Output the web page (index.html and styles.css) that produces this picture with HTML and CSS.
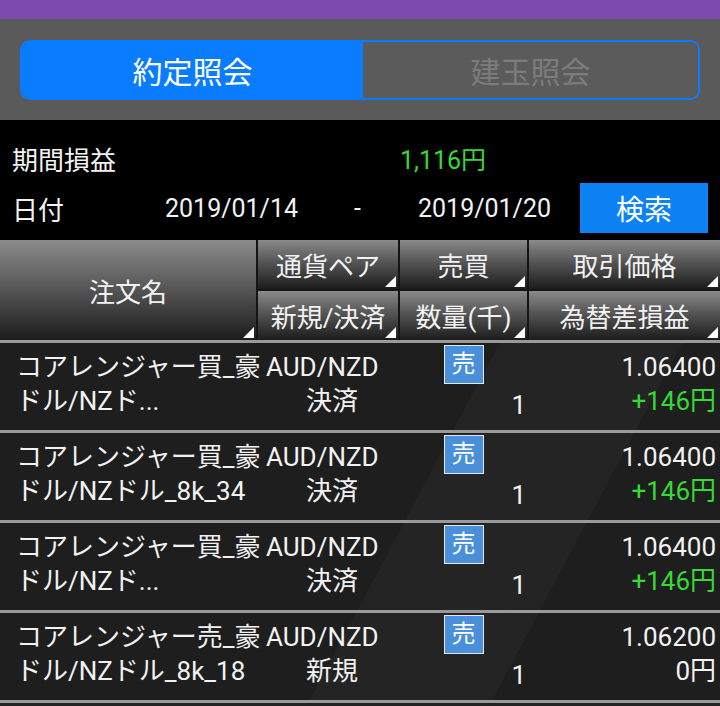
FILE: index.html
```html
<!DOCTYPE html>
<html lang="ja">
<head>
    <meta charset="UTF-8">
    <meta name="viewport" content="width=device-width, initial-scale=1.0">
    <title>約定照会</title>
    <link rel="stylesheet" href="styles.css">
</head>
<body>
    <div class="topbar"></div>

    <div class="tabs-area">
        <div class="tabs">
            <div class="tab active">約定照会</div>
            <div class="tab">建玉照会</div>
        </div>
    </div>

    <div class="summary">
        <div class="summary-row">
            <span class="summary-label">期間損益</span>
            <span class="profit">1,116円</span>
        </div>
        <div class="summary-row">
            <span class="date-label">日付</span>
            <span class="date-from">2019/01/14</span>
            <span class="date-sep">-</span>
            <span class="date-to">2019/01/20</span>
            <button type="button" class="search-button">検索</button>
        </div>
    </div>

    <div class="table-head">
        <div class="head-cell head-name sort">注文名</div>
        <div class="head-cell sort">通貨ペア</div>
        <div class="head-cell sort">売買</div>
        <div class="head-cell sort">取引価格</div>
        <div class="head-cell sort">新規/決済</div>
        <div class="head-cell sort">数量(千)</div>
        <div class="head-cell sort">為替差損益</div>
    </div>

    <div class="orders">
        <div class="order">
            <div class="col-name">コアレンジャー買_豪<br>ドル/NZド...</div>
            <div class="col-pair"><span class="pair">AUD/NZD</span><span class="kind">決済</span></div>
            <div class="col-qty"><span class="side">売</span><span class="qty">1</span></div>
            <div class="col-price"><span>1.06400</span><span class="gain">+146円</span></div>
        </div>
        <div class="order">
            <div class="col-name">コアレンジャー買_豪<br>ドル/NZドル_8k_34</div>
            <div class="col-pair"><span class="pair">AUD/NZD</span><span class="kind">決済</span></div>
            <div class="col-qty"><span class="side">売</span><span class="qty">1</span></div>
            <div class="col-price"><span>1.06400</span><span class="gain">+146円</span></div>
        </div>
        <div class="order">
            <div class="col-name">コアレンジャー買_豪<br>ドル/NZド...</div>
            <div class="col-pair"><span class="pair">AUD/NZD</span><span class="kind">決済</span></div>
            <div class="col-qty"><span class="side">売</span><span class="qty">1</span></div>
            <div class="col-price"><span>1.06400</span><span class="gain">+146円</span></div>
        </div>
        <div class="order">
            <div class="col-name">コアレンジャー売_豪<br>ドル/NZドル_8k_18</div>
            <div class="col-pair"><span class="pair">AUD/NZD</span><span class="kind">新規</span></div>
            <div class="col-qty"><span class="side">売</span><span class="qty">1</span></div>
            <div class="col-price"><span>1.06200</span><span>0円</span></div>
        </div>
    </div>
</body>
</html>
```

FILE: styles.css
```css
body {
    margin: 0;
    height: 706px;
    overflow: hidden;
    background-color: #222;
    color: #f2f2f2;
    font-family: Roboto, "Noto Sans CJK JP", sans-serif;
}
.topbar {
    height: 19px;
    background-color: #7b4aae;
}
.tabs-area {
    height: 101px;
    background-color: #5a5a5a;
    padding-top: 21px;
    box-sizing: border-box;
}
.tabs {
    display: grid;
    grid-template-columns: 341px 1fr;
    width: 680px;
    height: 60px;
    margin: 0 20px;
    border: 2px solid #0a7cff;
    border-radius: 10px;
    box-sizing: border-box;
    overflow: hidden;
}
.tab {
    display: flex;
    justify-content: center;
    align-items: center;
    font-size: 30px;
    color: #7c7c7c;
    background-color: #5b5b5b;
}
.tab.active {
    color: #fff;
    background-color: #0a7cff;
}
.summary {
    height: 120px;
    background-color: #000;
    padding: 13px 0 7px 12px;
    box-sizing: border-box;
    font-size: 25px;
}
.summary-row {
    display: flex;
    align-items: center;
    height: 50px;
}
.summary-label {
    width: 388px;
    font-size: 26px;
}
.profit {
    color: #36d936;
}
.date-label {
    width: 153px;
    font-size: 26px;
}
.date-from {
    width: 189px;
}
.date-sep {
    width: 64px;
}
.date-to {
    width: 162px;
}
.search-button {
    width: 128px;
    height: 50px;
    border: none;
    background-color: #0c82f5;
    color: #fff;
    font-family: inherit;
    font-size: 28px;
    padding: 0;
}
.table-head {
    display: grid;
    grid-template-columns: 256px 140px 127px 1fr;
    grid-template-rows: 49px 49px;
    gap: 2px;
    height: 100px;
    background-color: #151515;
    font-size: 26px;
}
.head-cell {
    position: relative;
    display: flex;
    justify-content: center;
    align-items: center;
    background: linear-gradient(#8a8a8a, #555 45%, #1c1c1c);
}
.head-name {
    grid-row: span 2;
    background: linear-gradient(#8c8c8c, #5a5a5a 45%, #1c1c1c);
}
.sort::after {
    content: "";
    position: absolute;
    right: 2px;
    bottom: 2px;
    border-left: 11px solid transparent;
    border-bottom: 11px solid #fff;
}
.orders {
    background:
        linear-gradient(118deg, transparent 55%, rgba(255, 255, 255, 0.03) 55%, rgba(255, 255, 255, 0.03) 75%, transparent 75%),
        #222;
    border-bottom: 3px solid #9a9a9a;
}
.order {
    display: grid;
    grid-template-columns: 264px 136px 127px 1fr;
    height: 90px;
    border-top: 3px solid #9a9a9a;
    box-sizing: border-box;
    font-size: 26px;
    line-height: 34px;
    background-color: rgba(0, 0, 0, 0.1);
}
.col-name {
    padding: 7px 0 0 16px;
    white-space: nowrap;
}
.col-pair {
    display: flex;
    flex-direction: column;
    padding-top: 7px;
}
.pair {
    padding-left: 2px;
}
.kind {
    text-align: center;
}
.col-qty {
    display: flex;
    flex-direction: column;
    align-items: center;
}
.side {
    width: 38px;
    height: 37px;
    margin-top: 2px;
    border: 1px solid #e8e8e8;
    background-color: #4a8fd9;
    color: #fff;
    font-size: 24px;
    line-height: 37px;
    text-align: center;
}
.qty {
    align-self: flex-end;
    margin-top: 4px;
    padding-right: 1px;
}
.col-price {
    display: flex;
    flex-direction: column;
    align-items: flex-end;
    padding: 7px 4px 0 0;
}
.gain {
    color: #36d936;
}
```
